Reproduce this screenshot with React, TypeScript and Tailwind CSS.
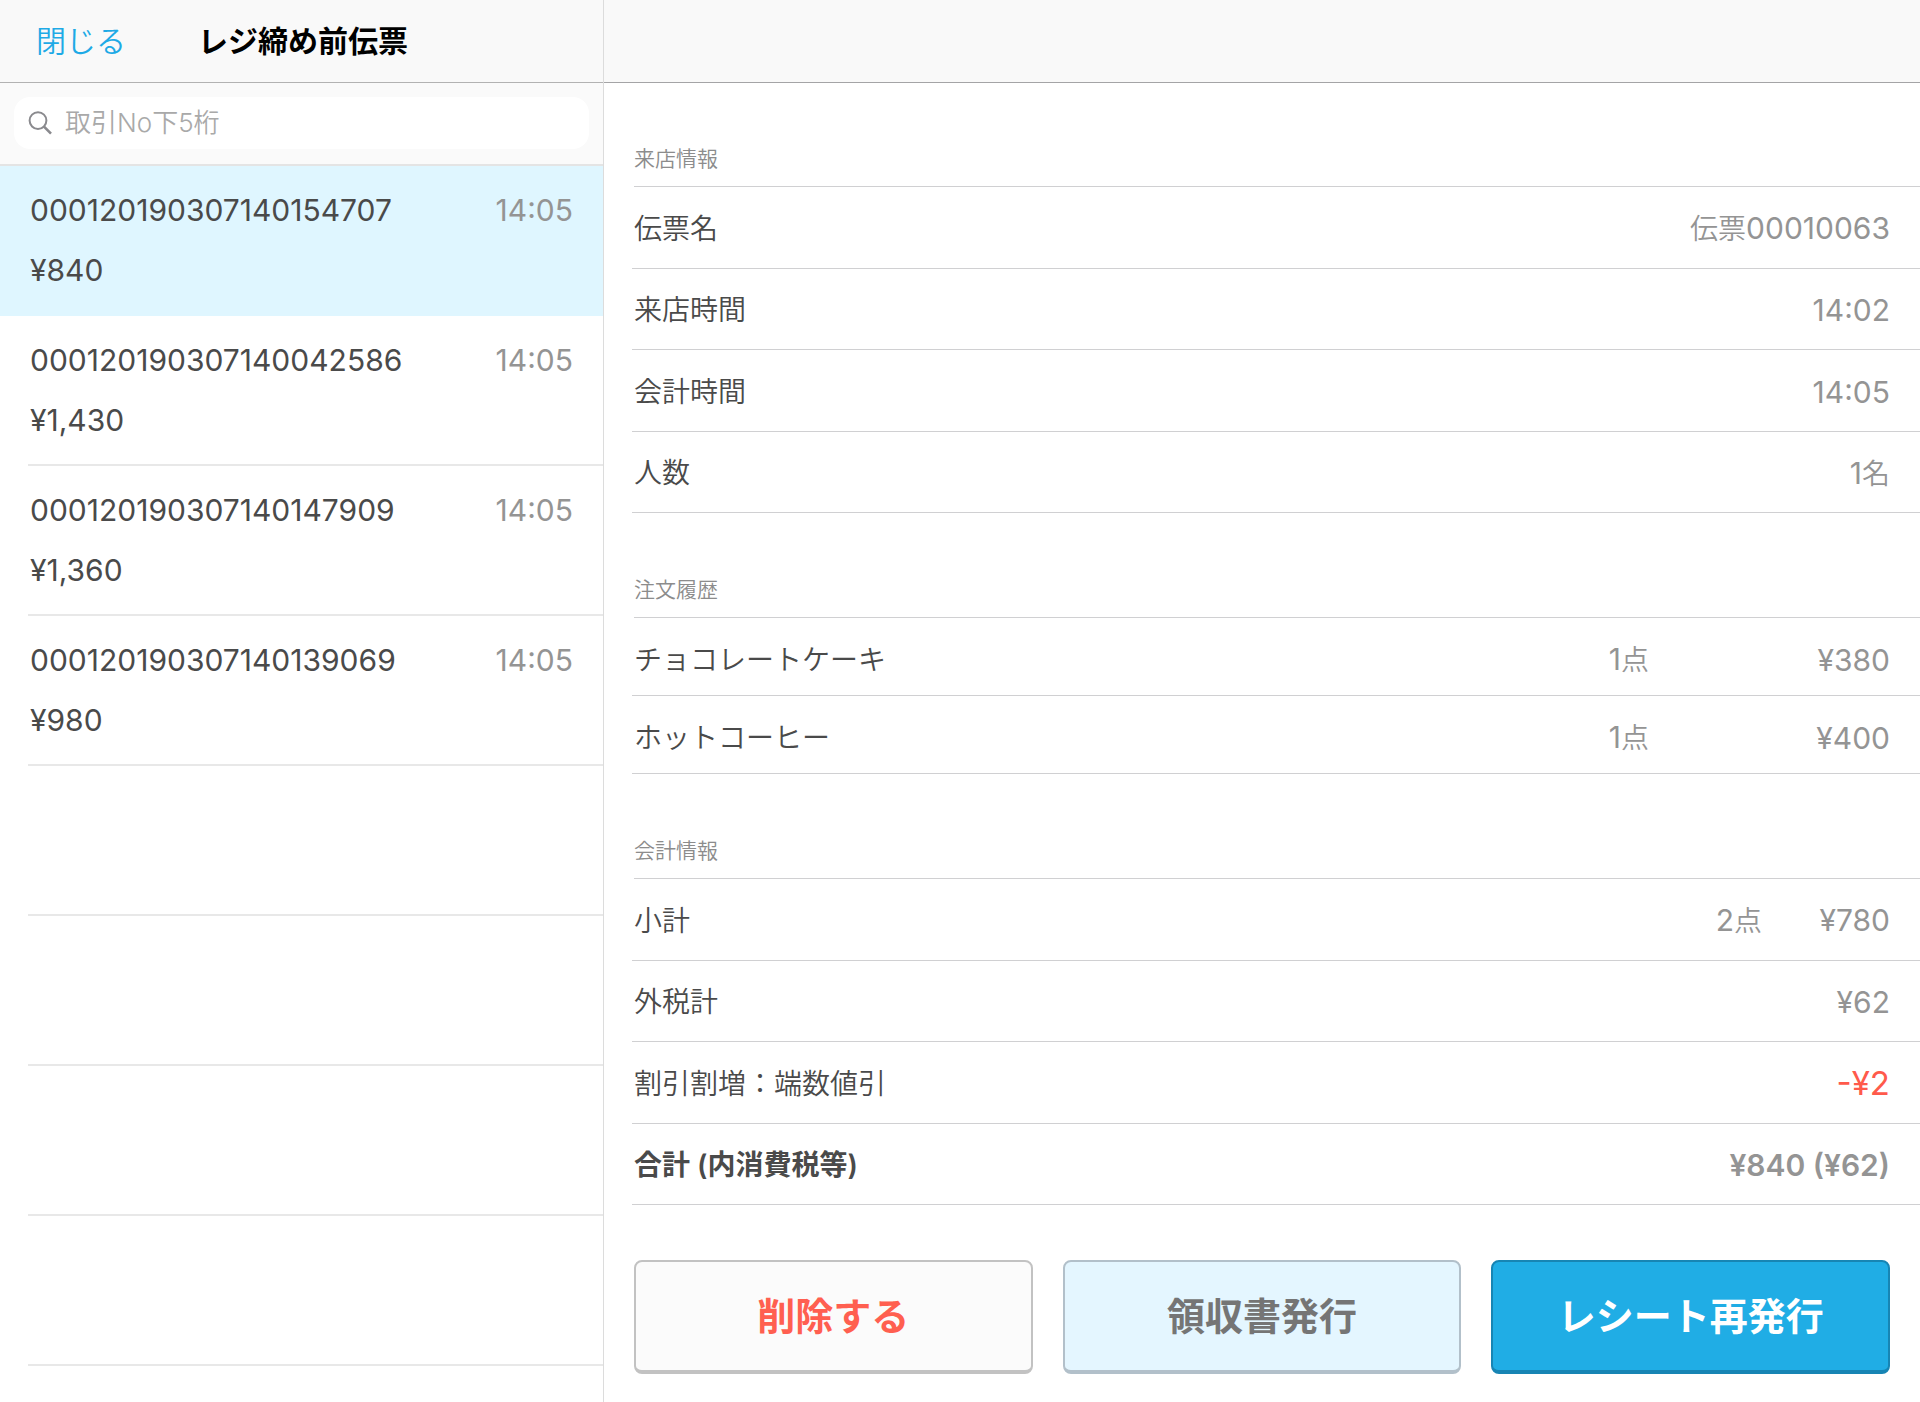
import { ReactNode, useState } from "react";
import clsx from "clsx";

const slips = [
  { no: "000120190307140154707", time: "14:05", amount: "¥840" },
  { no: "000120190307140042586", time: "14:05", amount: "¥1,430" },
  { no: "000120190307140147909", time: "14:05", amount: "¥1,360" },
  { no: "000120190307140139069", time: "14:05", amount: "¥980" },
];

const orders = [
  { name: "チョコレートケーキ", count: 1, price: "¥380" },
  { name: "ホットコーヒー", count: 1, price: "¥400" },
];

const SearchIcon = () => (
  <svg
    className="w-6 h-6 shrink-0"
    viewBox="0 0 24 24"
    fill="none"
    stroke="#8a8a8e"
    aria-hidden="true"
  >
    <circle cx="10" cy="9.6" r="8.4" strokeWidth="2" />
    <path d="M16 15.6l7 7" strokeWidth="2.6" />
  </svg>
);

const Sidebar = () => {
  const [selected, setSelected] = useState(0);

  return (
    <aside className="w-[604px] shrink-0 border-r border-[#dcdcdc]">
      <header className="flex items-center h-[83px] pl-9 bg-[#f9f9f9] border-b border-[#b2b2b2] text-[30px] leading-10">
        <button className="text-[#1eaae6]">閉じる</button>
        <h1 className="ml-[72px] font-bold text-black">レジ締め前伝票</h1>
      </header>

      <div className="h-[83px] px-3.5 pt-3.5 bg-[#fafafa] border-b-2 border-[#e4e4e4]">
        <label className="flex items-center h-[52px] gap-[13px] px-3.5 rounded-2xl bg-white">
          <SearchIcon />
          <input
            className="flex-1 min-w-0 text-[26px] leading-8 outline-none placeholder:text-[#a9a9a9]"
            type="text"
            aria-label="取引No下5桁"
            placeholder="取引No下5桁"
          />
        </label>
      </div>

      <ul className="text-[30px] font-normal">
        {slips.map((slip, i) => (
          <li key={slip.no} className={clsx(i === selected && "bg-[#dff6ff]")}>
            <button
              className="block w-full pl-7 text-left"
              onClick={() => setSelected(i)}
            >
              <span
                className={clsx(
                  "flex flex-col gap-5 h-[150px] pt-6 pr-[30px] border-b-2 leading-10",
                  i === selected ? "border-transparent" : "border-[#e8e8e8]"
                )}
              >
                <span className="flex justify-between pl-0.5">
                  <span>{slip.no}</span>
                  <span className="text-[#949494]">{slip.time}</span>
                </span>
                <span className="pl-0.5">{slip.amount}</span>
              </span>
            </button>
          </li>
        ))}
        {[0, 1, 2, 3].map((i) => (
          <li key={i} className="h-[150px] ml-7 border-b-2 border-[#e8e8e8]" />
        ))}
      </ul>
    </aside>
  );
};

const Kanji = ({ children }: { children: ReactNode }) => (
  <span className="text-[28px] font-[350]">{children}</span>
);

const Section = ({ title, children }: { title: string; children: ReactNode }) => (
  <section>
    <h2 className="flex items-end h-[104px] ml-0.5 pb-[13px] border-b border-[#d0d0d2] text-[21px] leading-7 text-[#8c8c8c]">
      {title}
    </h2>
    {children}
  </section>
);

type RowProps = {
  label: string;
  bold?: boolean;
  children: ReactNode;
};

const Row = ({ label, bold, children }: RowProps) => (
  <div
    className={clsx(
      "flex items-center justify-between odd:h-[82px] even:h-[81px] pt-0.5 pl-0.5 pr-[30px] border-b border-[#d0d0d2]",
      bold && "font-semibold"
    )}
  >
    <dt>{label}</dt>
    <dd
      className={clsx("text-[30px] text-[#949494]", !bold && "font-normal")}
    >
      {children}
    </dd>
  </div>
);

export default function App() {
  return (
    <div className="flex min-h-screen bg-white text-[#4a4a4a] text-[28px] leading-10 font-[350] font-['Inter','Noto_Sans_CJK_JP',sans-serif]">
      <Sidebar />

      <main className="flex-1 min-w-0">
        <div className="h-[83px] bg-[#f9f9f9] border-b border-[#a4a4a6]" />

        <div className="flex flex-col gap-px pl-7">
          <Section title="来店情報">
            <dl>
              <Row label="伝票名">
                <Kanji>伝票</Kanji>00010063
              </Row>
              <Row label="来店時間">14:02</Row>
              <Row label="会計時間">14:05</Row>
              <Row label="人数">
                1<Kanji>名</Kanji>
              </Row>
            </dl>
          </Section>

          <Section title="注文履歴">
            <table className="w-full border-separate border-spacing-0">
              <tbody>
                {orders.map((order) => (
                  <tr key={order.name} className="h-[78px]">
                    <td className="pt-1.5 pl-0.5 border-b border-[#d0d0d2]">
                      {order.name}
                    </td>
                    <td className="pt-1.5 border-b border-[#d0d0d2] text-right text-[30px] font-normal text-[#949494]">
                      {order.count}
                      <Kanji>点</Kanji>
                    </td>
                    <td className="w-[271px] pt-1.5 pr-[30px] border-b border-[#d0d0d2] text-right text-[30px] font-normal text-[#949494]">
                      {order.price}
                    </td>
                  </tr>
                ))}
              </tbody>
            </table>
          </Section>

          <Section title="会計情報">
            <dl>
              <Row label="小計">
                2<Kanji>点</Kanji>
                <span className="inline-block w-32 text-right">¥780</span>
              </Row>
              <Row label="外税計">¥62</Row>
              <Row label="割引割増：端数値引">
                <span className="text-[33px] text-[#ff5a4b]">-¥2</span>
              </Row>
              <Row label="合計 (内消費税等)" bold>
                ¥840 (¥62)
              </Row>
            </dl>
          </Section>
        </div>

        <div className="grid grid-cols-3 gap-[30px] pt-[55px] pb-7 px-[30px] text-[38px] leading-[56px] font-bold">
          <button className="h-[114px] rounded-lg border-2 border-b-4 border-[#c2c2c2] bg-[#fbfbfb] text-[#ff5f50]">
            削除する
          </button>
          <button className="h-[114px] rounded-lg border-2 border-b-4 border-[#b2c0ca] bg-[#e4f6ff] text-[#757575]">
            領収書発行
          </button>
          <button className="h-[114px] rounded-lg border-2 border-b-4 border-[#1785b4] bg-[#20ade5] text-white">
            レシート再発行
          </button>
        </div>
      </main>
    </div>
  );
}
